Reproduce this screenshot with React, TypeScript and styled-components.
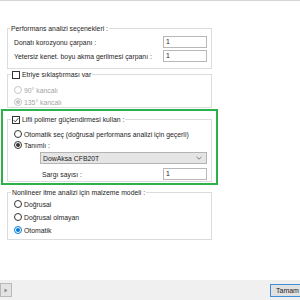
import React from "react";
import styled, { createGlobalStyle } from "styled-components";

const Global = createGlobalStyle`
  html, body { margin: 0; padding: 0; background: #ffffff; }
  body { font-family: "Liberation Sans", Arial, sans-serif; }
`;

const Frame = styled.div`
  width: 300px;
  height: 300px;
  box-sizing: border-box;
  overflow: hidden;
  display: flex;
  flex-direction: column;
  border-top: 1px solid #d4d4d4;
  background: #ffffff;
  font-size: 6.85px;
  color: #1e1e1e;
`;

const Content = styled.div`
  flex: 1;
  width: 205px;
  padding: 23px 0 0 7px;
  display: flex;
  flex-direction: column;
`;

const Group = styled.fieldset<{ $mt: number; $pt: number; $pb: number }>`
  margin: ${(p) => p.$mt}px 0 0;
  padding: ${(p) => p.$pt}px 4px ${(p) => p.$pb}px 6px;
  border: 1px solid #dcdcdc;
  min-width: 0;
  width: 100%;
  box-sizing: border-box;
  display: flex;
  flex-direction: column;
`;

const Legend = styled.legend<{ $ml: number }>`
  margin-left: ${(p) => p.$ml}px;
  padding: 0 1px;
  height: 9px;
  line-height: 9px;
  display: flex;
  align-items: center;
  gap: 2px;
  color: #1e1e1e;
  white-space: nowrap;
`;

const Rows = styled.div<{ $gap: number }>`
  display: flex;
  flex-direction: column;
  gap: ${(p) => p.$gap}px;
`;

const FieldRow = styled.div<{ $indent?: number; $mt?: number }>`
  display: flex;
  align-items: center;
  justify-content: space-between;
  height: 12px;
  padding-left: ${(p) => p.$indent ?? 0}px;
  margin-top: ${(p) => p.$mt ?? 0}px;
  white-space: nowrap;
`;

const NumBox = styled.div`
  width: 44px;
  height: 12px;
  box-sizing: border-box;
  border: 1px solid #b8b8b8;
  padding-left: 2px;
  line-height: 10px;
  color: #1b1b3a;
  background: #ffffff;
`;

const RadioRow = styled.div<{ $disabled?: boolean }>`
  display: flex;
  align-items: center;
  gap: 2px;
  height: 10px;
  white-space: nowrap;
  color: ${(p) => (p.$disabled ? "#a4a4a4" : "#1e1e1e")};
`;

const RadioDot = styled.span<{ $checked?: boolean; $tone: "dark" | "gray" | "blue" }>`
  width: 8px;
  height: 8px;
  flex: none;
  box-sizing: border-box;
  border-radius: 50%;
  border: 1px solid
    ${(p) => (p.$tone === "gray" ? "#c6c6c6" : p.$tone === "blue" ? "#0078d7" : "#333333")};
  background: #ffffff;
  display: flex;
  align-items: center;
  justify-content: center;
  &::after {
    content: "";
    width: 4px;
    height: 4px;
    border-radius: 50%;
    display: ${(p) => (p.$checked ? "block" : "none")};
    background: ${(p) => (p.$tone === "gray" ? "#c6c6c6" : p.$tone === "blue" ? "#0078d7" : "#333333")};
  }
`;

const CheckBox = styled.span`
  width: 8px;
  height: 8px;
  flex: none;
  box-sizing: border-box;
  border: 1px solid #333333;
  background: #ffffff;
  display: flex;
  align-items: center;
  justify-content: center;
`;

const Highlight = styled.div`
  margin: 1px -6px 0;
  border: 2px solid #2db14b;
  padding: 4px 4px 1px 4px;
`;

const Select = styled.div`
  margin: 2px 0 0 26px;
  height: 12px;
  box-sizing: border-box;
  border: 1px solid #b4b4b4;
  background: #e5e5e5;
  display: flex;
  align-items: center;
  justify-content: space-between;
  padding: 0 4px 0 2px;
  color: #1e1e1e;
`;

const Footer = styled.div`
  height: 20px;
  flex: none;
  background: #f0f0f0;
  display: flex;
  align-items: center;
  justify-content: space-between;
`;

const SmallButton = styled.div`
  width: 12px;
  height: 14px;
  box-sizing: border-box;
  border: 1px solid #b9b9b9;
  background: #e3e3e3;
  display: flex;
  align-items: center;
  justify-content: center;
`;

const OkButton = styled.div`
  width: 50px;
  height: 13px;
  margin-right: -20px;
  box-sizing: border-box;
  border: 1px solid #3c8fd8;
  background: #e1e1e1;
  padding-left: 5px;
  line-height: 11px;
  font-size: 7px;
  color: #1e1e1e;
`;

const Check = () => (
  <svg width="6" height="6" viewBox="0 0 6 6">
    <path d="M0.6 3.1 L2.3 4.8 L5.4 1.1" fill="none" stroke="#333" strokeWidth="0.9" />
  </svg>
);

type RadioProps = { label: string; checked?: boolean; tone?: "dark" | "gray" | "blue" };
const Radio = ({ label, checked, tone = "dark" }: RadioProps) => (
  <RadioRow $disabled={tone === "gray"}>
    <RadioDot $checked={checked} $tone={tone} />
    <span>{label}</span>
  </RadioRow>
);

export default function App() {
  return (
    <>
      <Global />
      <Frame>
        <Content>
          <Group $mt={0} $pt={3} $pb={6}>
            <Legend $ml={-4}>Performans analizi seçenekleri :</Legend>
            <Rows $gap={2}>
              <FieldRow>
                <span>Donatı korozyonu çarpanı :</span>
                <NumBox>1</NumBox>
              </FieldRow>
              <FieldRow>
                <span>Yetersiz kenet. boyu akma gerilmesi çarpanı :</span>
                <NumBox>1</NumBox>
              </FieldRow>
            </Rows>
          </Group>

          <Group $mt={1} $pt={6} $pb={0}>
            <Legend $ml={-3}>
              <CheckBox />
              <span>Etriye sıklaştırması var</span>
            </Legend>
            <Rows $gap={2}>
              <Radio label="90° kancalı" tone="gray" />
              <Radio label="135° kancalı" tone="gray" checked />
            </Rows>
          </Group>

          <Highlight>
            <Group $mt={0} $pt={5} $pb={1}>
              <Legend $ml={-3}>
                <CheckBox>
                  <Check />
                </CheckBox>
                <span>Lifli polimer güçlendirmesi kullan :</span>
              </Legend>
              <Rows $gap={1}>
                <Radio label="Otomatik seç (doğrusal performans analizi için geçerli)" />
                <Radio label="Tanımlı :" checked />
              </Rows>
              <Select>
                <span>DowAksa CFB20T</span>
                <svg width="6" height="4" viewBox="0 0 6 4">
                  <path d="M0.5 0.8 L3 3.2 L5.5 0.8" fill="none" stroke="#6a6a6a" strokeWidth="0.8" />
                </svg>
              </Select>
              <FieldRow $indent={28} $mt={4}>
                <span>Sargı sayısı :</span>
                <NumBox>1</NumBox>
              </FieldRow>
            </Group>
          </Highlight>

          <Group $mt={3} $pt={2} $pb={4}>
            <Legend $ml={-3}>Nonlineer itme analizi için malzeme modeli :</Legend>
            <Rows $gap={3}>
              <Radio label="Doğrusal" />
              <Radio label="Doğrusal olmayan" />
              <Radio label="Otomatik" checked tone="blue" />
            </Rows>
          </Group>
        </Content>
        <Footer>
          <SmallButton>
            <svg width="4" height="5" viewBox="0 0 4 5">
              <path d="M0.5 0.5 L3.5 2.5 L0.5 4.5 Z" fill="#8a8a8a" />
            </svg>
          </SmallButton>
          <OkButton>Tamam</OkButton>
        </Footer>
      </Frame>
    </>
  );
}
